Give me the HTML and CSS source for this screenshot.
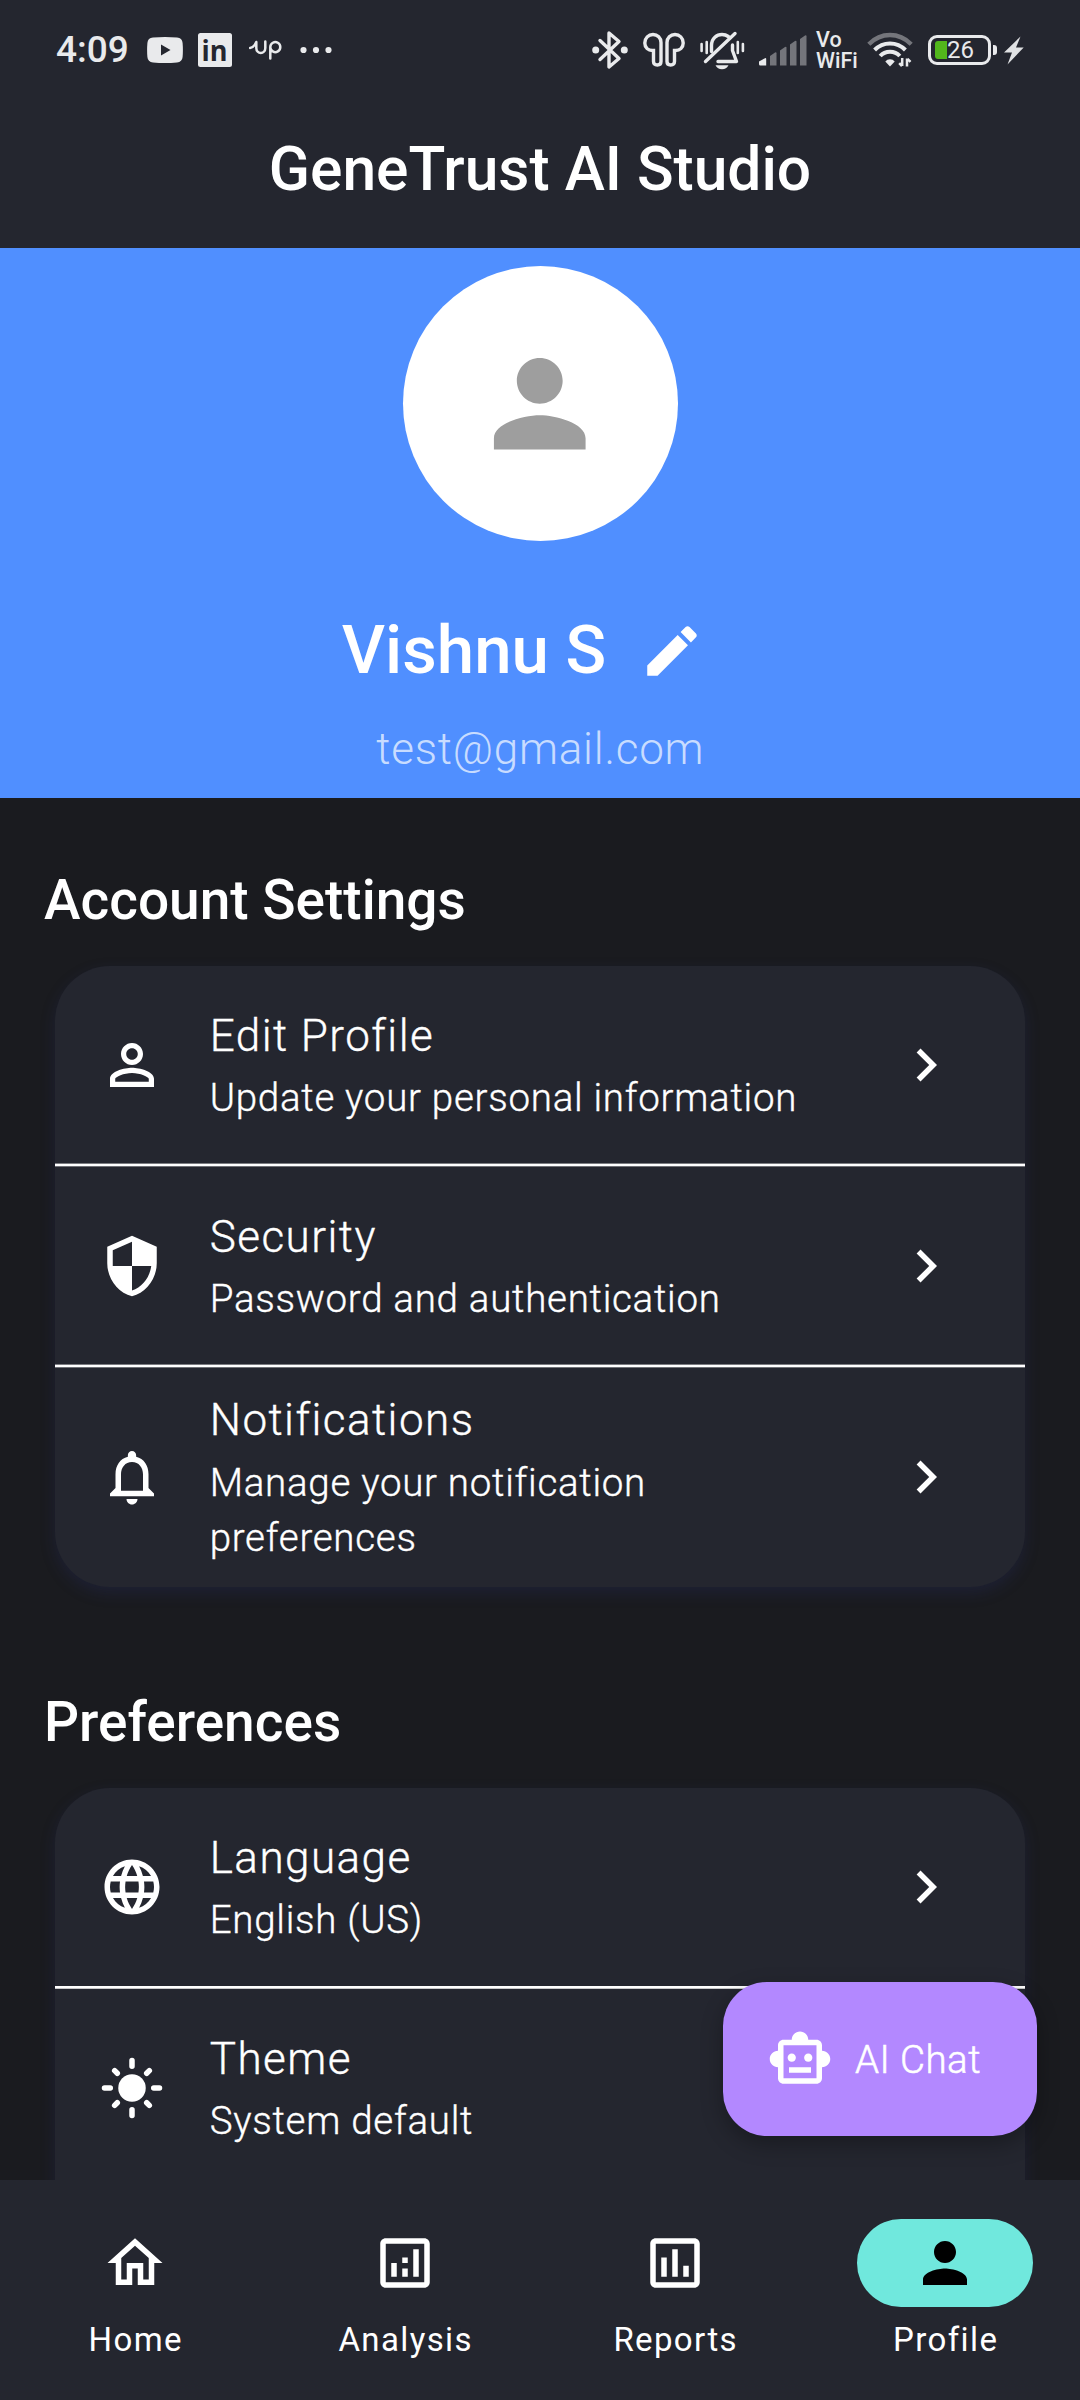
FILE: index.html
```html
<!DOCTYPE html>
<html lang="en">
<head>
<meta charset="utf-8">
<title>GeneTrust AI Studio</title>
<link rel="stylesheet" href="styles.css">
</head>
<body>
<div class="app">
  <header class="topbar">
    <div class="status">
      <div class="status-left">
        <span class="clock">4:09</span>
        <svg class="st-youtube" width="36" height="26" viewBox="0 0 36 26"><path fill="#e9eaec" fill-rule="evenodd" d="M6 .6Q18-.4 30 .6 35.200 1 35.600 6 36.200 13 35.600 20 35.200 25 30 25.400 18 26.400 6 25.400.8 25 .4 20-.2 13 .4 6 .8 1 6 .6ZM14 7.600v11l9.500-5.500Z"/></svg>
        <svg class="st-linkedin" width="34" height="34" viewBox="0 0 34 34"><rect width="34" height="34" rx="2.500" fill="#e9eaec"/><text x="3.500" y="28" class="in-mark" textLength="26" lengthAdjust="spacingAndGlyphs">in</text></svg>
        <svg class="st-upwork" width="34" height="22" viewBox="0 0 34 22"><path d="M1 10Q5 9.500 7.300 4V10c0 6.500 9 6.500 9 0V3.500M21.300 20.500V9a5 5 0 1 1 0 .2" fill="none" stroke="#e9eaec" stroke-width="2.500" stroke-linecap="round" stroke-linejoin="round"/></svg>
        <svg class="st-dots" width="32" height="8" viewBox="0 0 32 8" fill="#e9eaec"><circle cx="3.500" cy="4" r="3.100"/><circle cx="16" cy="4" r="3.100"/><circle cx="28.500" cy="4" r="3.100"/></svg>
      </div>
      <div class="status-right">
        <svg class="st-bt" width="36" height="40" viewBox="0 0 36 40"><path d="M8 10.500 27 28.500 17 37V3l10 8.500L8 29.500" fill="none" stroke="#e9eaec" stroke-width="3.400" stroke-linejoin="round" stroke-linecap="round"/><circle cx="3.700" cy="20" r="3.500" fill="#e9eaec"/><circle cx="32.300" cy="20" r="3.500" fill="#e9eaec"/></svg>
        <svg class="st-pods" width="42" height="36" viewBox="0 0 42 36" fill="none" stroke="#e9eaec" stroke-width="3.400"><path d="M10 2.500C14.500 2.500 18 6 18 10.500V29.500Q18 33 14.300 33T10.500 29.500V18.500C5 19 1.800 15.500 1.800 11 1.800 6 5.500 2.500 10 2.500Z"/><path d="M32 2.500C27.500 2.500 24 6 24 10.500V29.500Q24 33 27.700 33T31.500 29.500V18.500C37 19 40.200 15.500 40.200 11 40.200 6 36.500 2.500 32 2.500Z"/></svg>
        <svg class="st-mute" width="45" height="40" viewBox="0 0 45 40"><g fill="none" stroke="#e9eaec" stroke-width="3.400" stroke-linecap="round"><path d="M11.500 21.500V15.500C11.500 8 17 4.500 22 4.500c2.500 0 4.500.700 6.300 2"/><path d="M32.500 15V20.500L36.500 31.500H18" stroke-linejoin="round"/><path d="M5.500 31.500 35 3.500"/><path d="M1.600 14v7M6.700 12v11M37.800 12v11M42.900 14v7" stroke-width="2.600"/></g><path d="M15.500 35.300h13q-2 4-6.500 4t-6.500-4Z" fill="#e9eaec"/></svg>
        <svg class="st-signal" width="48" height="31" viewBox="0 0 48 31" fill="#74757b"><path fill="#e9eaec" d="M0 26.500 6 23.200q1.200-.6 1.200 1V30.500H1.300Q0 30.500 0 29Z"/><path d="M11 21 16 17.500q1.500-.8 1.500.7V30.500H11Z"/><path d="M21 15.500 26 12q1.500-.8 1.500.7V30.500H21Z"/><path d="M31 9.500 36 6q1.500-.8 1.500.7V30.500H31Z"/><path d="M41 4 46 .600q1.500-.8 1.500.7V30.500H41Z"/></svg>
        <div class="st-vowifi"><span>Vo</span><span>WiFi</span></div>
        <svg class="st-wifi" width="46" height="36" viewBox="0 0 46 36" fill="none"><path d="M1.800 12.200Q11 3 23 3T44.200 12.200" stroke="#74757b" stroke-width="4.400"/><path d="M7.600 18Q14 11.400 23 11.400T38.400 18M13.200 24Q17 19.700 23 19.700T32.800 24" stroke="#e9eaec" stroke-width="4"/><path d="M23 34.500 18.300 29.500Q20 27.200 23 27.200T27.700 29.500Z" fill="#e9eaec"/><path d="M35.200 26v8M32.200 31.200 35 34M40 34.500v-8M43.500 29.800 40.500 26.800" stroke="#e9eaec" stroke-width="2.500"/></svg>
        <div class="st-battery"><span class="battery-level"></span><span class="battery-text">26</span></div>
        <span class="battery-nub"></span>
        <svg class="st-bolt" width="20" height="29" viewBox="0 0 20 29"><path fill="#e0e1e3" d="M16.500.5 0 16.500H8L3.500 28.500 19.700 11.500H12Z"/></svg>
      </div>
    </div>
    <h1 class="app-title">GeneTrust AI Studio</h1>
  </header>

  <main class="content">
    <section class="hero">
      <div class="avatar">
        <svg class="avatar-icon" viewBox="0 0 24 24"><path d="M12 12c2.210 0 4-1.790 4-4s-1.790-4-4-4-4 1.790-4 4 1.790 4 4 4zm0 2c-2.670 0-8 1.340-8 4v2h16v-2c0-2.660-5.330-4-8-4z"/></svg>
      </div>
      <div class="name-row">
        <span class="name">Vishnu S</span>
        <span class="edit-btn"><svg class="icon" viewBox="0 0 24 24"><path d="M3 17.250V21h3.750L17.810 9.940l-3.750-3.750L3 17.250zM20.710 7.040c.39-.39.39-1.020 0-1.410l-2.340-2.340c-.39-.39-1.020-.39-1.410 0l-1.830 1.830 3.750 3.750 1.830-1.830z"/></svg></span>
      </div>
      <div class="email">test@gmail.com</div>
    </section>

    <h2 class="section-title">Account Settings</h2>
    <div class="card">
      <div class="row">
        <svg class="icon" viewBox="0 0 24 24"><path d="M12 5.900c1.160 0 2.100.94 2.100 2.100s-.94 2.100-2.100 2.100S9.900 9.160 9.900 8s.94-2.100 2.100-2.100m0 9c2.970 0 6.100 1.460 6.100 2.100v1.100H5.900V17c0-.64 3.130-2.100 6.100-2.100M12 4C9.790 4 8 5.790 8 8s1.790 4 4 4 4-1.790 4-4-1.790-4-4-4zm0 9c-2.670 0-8 1.340-8 4v3h16v-3c0-2.660-5.330-4-8-4z"/></svg>
        <div class="row-text"><div class="row-title">Edit Profile</div><div class="row-sub">Update your personal information</div></div>
        <svg class="icon" viewBox="0 0 24 24"><path d="M10 6 8.590 7.410 13.170 12l-4.580 4.590L10 18l6-6z"/></svg>
      </div>
      <div class="divider"></div>
      <div class="row">
        <svg class="icon" viewBox="0 0 24 24"><path d="M12 1 3 5v6c0 5.550 3.840 10.740 9 12 5.160-1.260 9-6.450 9-12V5l-9-4zm0 10.990h7c-.53 4.120-3.280 7.790-7 8.940V12H5V6.300l7-3.110v8.800z"/></svg>
        <div class="row-text"><div class="row-title">Security</div><div class="row-sub">Password and authentication</div></div>
        <svg class="icon" viewBox="0 0 24 24"><path d="M10 6 8.590 7.410 13.170 12l-4.580 4.590L10 18l6-6z"/></svg>
      </div>
      <div class="divider"></div>
      <div class="row row-tall">
        <svg class="icon" viewBox="0 0 24 24"><path d="M12 22c1.100 0 2-.9 2-2h-4c0 1.100.9 2 2 2zm6-6v-5c0-3.070-1.630-5.640-4.500-6.320V4c0-.83-.67-1.500-1.500-1.500s-1.500.67-1.500 1.500v.68C7.640 5.360 6 7.920 6 11v5l-2 2v1h16v-1l-2-2zm-2 1H8v-6c0-2.480 1.510-4.500 4-4.500s4 2.020 4 4.500v6z"/></svg>
        <div class="row-text"><div class="row-title">Notifications</div><div class="row-sub">Manage your notification<br>preferences</div></div>
        <svg class="icon" viewBox="0 0 24 24"><path d="M10 6 8.590 7.410 13.170 12l-4.580 4.590L10 18l6-6z"/></svg>
      </div>
    </div>

    <h2 class="section-title section-title-next">Preferences</h2>
    <div class="card card-prefs">
      <div class="row">
        <svg class="icon" viewBox="0 0 24 24"><path d="M11.990 2C6.470 2 2 6.480 2 12s4.470 10 9.990 10C17.520 22 22 17.520 22 12S17.520 2 11.990 2zm6.930 6h-2.950c-.32-1.250-.78-2.450-1.380-3.560 1.840.63 3.370 1.910 4.330 3.560zM12 4.040c.83 1.200 1.480 2.530 1.910 3.960h-3.820c.43-1.430 1.080-2.760 1.910-3.960zM4.260 14C4.100 13.360 4 12.690 4 12s.1-1.360.26-2h3.380c-.08.66-.14 1.320-.14 2s.06 1.340.14 2H4.260zm.82 2h2.950c.32 1.250.78 2.450 1.380 3.560-1.840-.63-3.370-1.900-4.330-3.560zm2.950-8H5.080c.96-1.660 2.490-2.930 4.330-3.560C8.810 5.550 8.350 6.750 8.030 8zM12 19.960c-.83-1.200-1.480-2.530-1.910-3.960h3.820c-.43 1.430-1.080 2.760-1.910 3.960zM14.340 14H9.660c-.09-.66-.16-1.320-.16-2s.07-1.350.16-2h4.680c.09.65.16 1.320.16 2s-.07 1.340-.16 2zm.25 5.560c.6-1.110 1.060-2.310 1.380-3.560h2.950c-.96 1.650-2.490 2.930-4.330 3.560zM16.360 14c.08-.66.14-1.320.14-2s-.06-1.340-.14-2h3.380c.16.64.26 1.310.26 2s-.1 1.360-.26 2h-3.380z"/></svg>
        <div class="row-text"><div class="row-title">Language</div><div class="row-sub">English (US)</div></div>
        <svg class="icon" viewBox="0 0 24 24"><path d="M10 6 8.590 7.410 13.170 12l-4.580 4.590L10 18l6-6z"/></svg>
      </div>
      <div class="divider"></div>
      <div class="row">
        <svg class="icon" viewBox="0 0 24 24"><circle cx="12" cy="12" r="5"/><path stroke="#fff" stroke-width="2" stroke-linecap="round" d="M12 2v2.100M12 19.900V22M2 12h2.100M19.900 12H22M5.700 5.700l.95.95M17.350 17.350l.95.95M5.700 18.300l.95-.95M17.350 6.650l.95-.95"/></svg>
        <div class="row-text"><div class="row-title">Theme</div><div class="row-sub">System default</div></div>
      </div>
    </div>
  </main>

  <button class="fab" type="button">
    <svg class="icon" viewBox="0 0 24 24"><path d="M20 9V7c0-1.100-.9-2-2-2h-3c0-1.660-1.340-3-3-3S9 3.340 9 5H6c-1.100 0-2 .9-2 2v2c-1.660 0-3 1.340-3 3s1.340 3 3 3v4c0 1.100.9 2 2 2h12c1.100 0 2-.9 2-2v-4c1.660 0 3-1.340 3-3s-1.340-3-3-3zm-2 10H6V7h12v12zm-9-6c-.83 0-1.500-.67-1.500-1.500S8.170 10 9 10s1.500.67 1.500 1.500S9.830 13 9 13zm7.500-1.500c0 .83-.67 1.500-1.500 1.500s-1.500-.67-1.500-1.500.67-1.500 1.500-1.500 1.500.67 1.500 1.500zM8 15h8v2H8v-2z"/></svg>
    <span>AI Chat</span>
  </button>

  <nav class="nav">
    <div class="nav-item">
      <span class="nav-pill"><svg class="icon" viewBox="0 0 24 24"><path d="M12 5.690l5 4.500V18h-2v-6H9v6H7v-7.810l5-4.500M12 3 2 12h3v8h6v-6h2v6h6v-8h3L12 3z"/></svg></span>
      <span class="nav-label">Home</span>
    </div>
    <div class="nav-item">
      <span class="nav-pill"><svg class="icon" viewBox="0 0 24 24"><path d="M19 3H5c-1.100 0-2 .9-2 2v14c0 1.100.9 2 2 2h14c1.100 0 2-.9 2-2V5c0-1.100-.9-2-2-2zm0 16H5V5h14v14zM7 12h2v5H7zM15 7h2v10h-2zM11 14h2v3h-2zM11 10h2v2h-2z"/></svg></span>
      <span class="nav-label">Analysis</span>
    </div>
    <div class="nav-item">
      <span class="nav-pill"><svg class="icon" viewBox="0 0 24 24"><path d="M19 3H5c-1.100 0-2 .9-2 2v14c0 1.100.9 2 2 2h14c1.100 0 2-.9 2-2V5c0-1.100-.9-2-2-2zm0 16H5V5h14v14zM7 10h2v7H7zM11 7h2v10h-2zM15 13h2v4h-2z"/></svg></span>
      <span class="nav-label">Reports</span>
    </div>
    <div class="nav-item nav-item-active">
      <span class="nav-pill"><svg class="icon" viewBox="0 0 24 24"><path d="M12 12c2.210 0 4-1.790 4-4s-1.790-4-4-4-4 1.790-4 4 1.790 4 4 4zm0 2c-2.670 0-8 1.340-8 4v2h16v-2c0-2.660-5.330-4-8-4z"/></svg></span>
      <span class="nav-label">Profile</span>
    </div>
  </nav>
</div>
</body>
</html>
```
FILE: styles.css
```css
* { box-sizing: border-box; }
body { margin: 0; background: #1a1b1f; color: #fff; font-family: Roboto, "Liberation Sans", sans-serif; }
svg { display: block; flex: none; }
h1, h2 { margin: 0; font-weight: 500; }

.app { position: relative; width: 1080px; height: 2400px; display: flex; flex-direction: column; overflow: hidden; }

/* Top bar */
.topbar { height: 248px; flex: none; background: #24262f; }
.status { height: 100px; padding: 0 56px; display: flex; justify-content: space-between; color: #e9eaec; }
.status-left, .status-right { display: flex; align-items: center; height: 100px; }
.clock { font-size: 37px; font-weight: 500; width: 91px; line-height: 44px; }
.st-linkedin { margin-left: 15px; overflow: visible; }
.in-mark { font: 700 29px "Open Sans", sans-serif; fill: #24262f; }
.st-upwork { margin: 0 0 2px 17px; }
.st-dots { margin-left: 17px; }
.st-pods { margin-left: 15px; }
.st-mute { margin-left: 15px; }
.st-signal { margin: 0 0 -1px 14px; }
.st-vowifi { margin-left: 9px; width: 43px; display: flex; flex-direction: column; font-size: 21.5px; font-weight: 500; line-height: 21.5px; }
.st-wifi { margin-left: 8px; }
.st-battery { margin: 0 0 1px 15px; width: 63px; height: 30px; border: 3px solid #e9eaec; border-radius: 9px; padding: 3px 4px; display: flex; }
.battery-level { width: 12px; height: 18px; background: #52b71c; border-radius: 3px 0 0 3px; }
.battery-text { font-size: 24px; font-weight: 400; line-height: 19px; }
.battery-nub { width: 4px; height: 10px; margin-left: 2px; background: #e9eaec; border-radius: 0 3px 3px 0; }
.st-bolt { margin-left: 7px; }
.app-title { font-size: 60.5px; line-height: 77px; padding-top: 31px; text-align: center; }

/* Profile header */
.content { flex: 1; min-height: 0; overflow: hidden; }
.hero { height: 550px; background: #508fff; display: flex; flex-direction: column; align-items: center; }
.avatar { width: 275px; height: 275px; margin-top: 18px; border-radius: 50%; background: #fff; display: flex; align-items: center; justify-content: center; flex: none; }
.avatar-icon { width: 137.5px; height: 137.5px; fill: #9e9e9e; }
.name-row { display: flex; align-items: center; height: 132px; margin-top: 44px; }
.name { margin-top: -2px; font-size: 67.2px; font-weight: 500; line-height: 88px; }
.edit-btn { width: 132px; height: 132px; display: flex; align-items: center; justify-content: center; }
.email { font-size: 44px; font-weight: 300; line-height: 64px; letter-spacing: .77px; padding-left: .7px; color: rgba(255, 255, 255, .7); }
.icon { width: 66px; height: 66px; fill: #fff; }

/* Settings lists */
.section-title { font-size: 55px; line-height: 77px; padding: 64px 44px 0; }
.section-title-next { padding-top: 97px; }
.card { margin: 27px 55px 0; background: #24262f; border-radius: 55px; box-shadow: 0 6px 15px rgba(40, 50, 115, .24); }
.card-prefs { height: 600px; }
.row { height: 197px; padding: 0 66px 0 44px; display: flex; align-items: center; }
.row-tall { height: 219px; padding-bottom: 1px; }
.card-prefs .row { height: 198px; padding-bottom: 1px; }
.row-text { flex: 1; padding-left: 44.7px; font-weight: 300; -webkit-text-stroke: .35px #fff; }
.row-title { margin-top: -2px; padding-bottom: 1px; font-size: 44px; line-height: 66px; letter-spacing: 1.45px; }
.row-sub { font-size: 38.5px; line-height: 55px; letter-spacing: .72px; }
.row-tall .row-title { padding-bottom: 2px; }
.divider { height: 4px; background: linear-gradient(rgba(255,255,255,.4) 1px, #fff 1px, #fff 3px, rgba(255,255,255,.35) 3px); }
.card-prefs .divider { height: 3px; background: linear-gradient(#fff 2px, rgba(255,255,255,.75) 2px); }

/* Floating chat button */
.fab { position: absolute; left: 723px; top: 1982px; width: 314px; height: 154px; padding: 0 0 0 44px; border: 0; border-radius: 44px; background: #b388ff; color: #fff; display: flex; align-items: center; gap: 22px; font: 300 38.5px Roboto, sans-serif; letter-spacing: .45px; -webkit-text-stroke: .5px #fff; box-shadow: 0 8px 22px rgba(0, 0, 0, .3); }

/* Bottom navigation */
.nav { height: 220px; flex: none; background: #24262f; display: flex; }
.nav-item { flex: 1; display: flex; flex-direction: column; align-items: center; padding-top: 39px; }
.nav-pill { width: 176px; height: 88px; border-radius: 44px; display: flex; align-items: center; justify-content: center; }
.nav-item-active .nav-pill { background: #70e8dd; }
.nav-item-active .icon { fill: #000; }
.nav-label { margin-top: 11px; padding-left: 1.4px; font-size: 33px; font-weight: 400; line-height: 44px; letter-spacing: 1.375px; }
```
